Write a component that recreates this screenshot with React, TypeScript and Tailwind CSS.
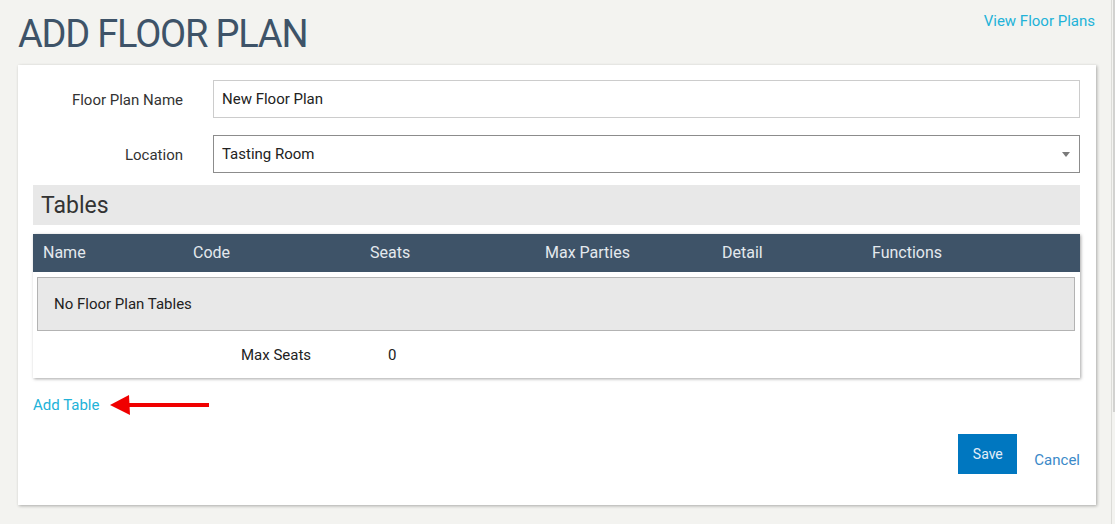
import React from "react";

export default function App() {
  const cols = [
    { label: "Name", w: "w-[150px]" },
    { label: "Code", w: "w-[177px]" },
    { label: "Seats", w: "w-[175px]" },
    { label: "Max Parties", w: "w-[177px]" },
    { label: "Detail", w: "w-[150px]" },
    { label: "Functions", w: "flex-1" },
  ];
  return (
    <div className="w-[1115px] h-[524px] bg-[#f3f3f0] flex overflow-hidden font-['Roboto',sans-serif] text-[#333]">
      <div className="flex-1 pl-[18px] pr-[15px]">
        <div className="h-[65px] flex justify-between items-start">
          <h1 className="mt-[15px] text-[38px] leading-none tracking-[-1.2px] text-[#3e5368] font-normal">
            ADD FLOOR PLAN
          </h1>
          <a className="mt-[11px] mr-[1px] text-[15px] leading-5 text-[#22b2d8] cursor-pointer">
            View Floor Plans
          </a>
        </div>
        <div className="bg-white h-[440px] pl-[15px] pr-[16px] pt-[15px] shadow-[1px_1px_3px_rgba(0,0,0,0.3)] flex flex-col">
          <div className="flex items-center h-[38px]">
            <label className="w-[150px] text-right text-[15px] text-[#333] pt-[2px]">Floor Plan Name</label>
            <div className="ml-[30px] flex-1 h-[38px] border border-[#cccccc] flex items-center pl-[8px] text-[15px] text-[#222]">
              New Floor Plan
            </div>
          </div>
          <div className="flex items-center h-[38px] mt-[17px]">
            <label className="w-[150px] text-right text-[15px] text-[#333] pt-[2px]">Location</label>
            <div className="ml-[30px] flex-1 h-[38px] border border-[#8c8c8c] flex items-center justify-between pl-[8px] pr-[9px] text-[15px] text-[#222]">
              <span>Tasting Room</span>
              <svg width="8" height="5" viewBox="0 0 8 5">
                <path d="M0 0 L8 0 L4 5 Z" fill="#7a7a7a" />
              </svg>
            </div>
          </div>
          <div className="mt-[12px] h-[40px] bg-[#e8e8e8] flex items-center pl-[8px]">
            <span className="text-[23px] text-[#333] pt-[3px]">Tables</span>
          </div>
          <div className="mt-[9px] shadow-[1px_1px_3px_rgba(0,0,0,0.35)] flex flex-col">
            <div className="h-[38px] bg-[#3e5368] flex items-center pl-[10px]">
              {cols.map((c) => (
                <div key={c.label} className={`${c.w} text-[16px] text-[#e4e9ee]`}>
                  {c.label}
                </div>
              ))}
            </div>
            <div className="mt-[5px] ml-[4px] mr-[5px] h-[54px] bg-[#e8e8e8] border border-[#b3b3b3] flex items-center pl-[16px] text-[15px] text-[#222]">
              No Floor Plan Tables
            </div>
            <div className="h-[47px] flex items-center pl-[208px] text-[15px] text-[#222] pt-[2px]">
              <span className="w-[147px]">Max Seats</span>
              <span>0</span>
            </div>
          </div>
          <div className="mt-[17px] h-[20px] flex items-center">
            <a className="text-[15px] text-[#22b2d8] cursor-pointer">Add Table</a>
            <svg className="ml-[11px]" width="100" height="22" viewBox="0 0 100 22">
              <path d="M0 11 L19 1 L20 21 Z" fill="#f00000" />
              <rect x="18" y="9" width="81" height="4" fill="#f00000" />
            </svg>
          </div>
          <div className="mt-[19px] flex justify-end items-start">
            <button className="w-[59px] h-[40px] bg-[#0077c0] text-[14px] text-[#e3eef8]">
              Save
            </button>
            <a className="ml-[17px] mt-[16px] text-[15px] leading-5 text-[#3a89c8] cursor-pointer">
              Cancel
            </a>
          </div>
        </div>
      </div>
      <div className="w-[4px] border-l border-[#dcdcd8] relative">
        <div className="w-[2px] h-[412px] bg-[#d2d2d0] ml-[1px]" />
      </div>
    </div>
  );
}
